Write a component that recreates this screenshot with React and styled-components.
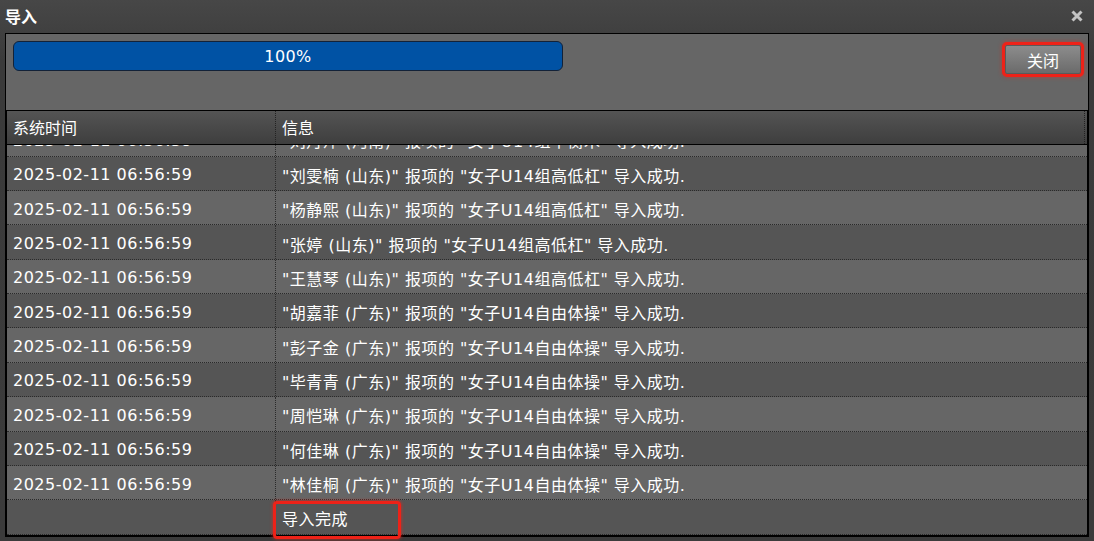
import React, { useLayoutEffect, useRef } from "react";
import styled, { createGlobalStyle } from "styled-components";

const GlobalStyle = createGlobalStyle`
  html, body { margin: 0; padding: 0; background: #3b3b3b; }
  body { font-family: "DejaVu Sans", "Noto Sans CJK SC", sans-serif; color: #fff; }
  * { box-sizing: border-box; }
`;

const Window = styled.div`
  width: 1094px;
  height: 541px;
  display: flex;
  flex-direction: column;
  background: linear-gradient(#474747, #3a3a3a 60px, #3b3b3b);
  overflow: hidden;
`;

const TitleBar = styled.div`
  height: 33px;
  flex: none;
  display: flex;
  align-items: center;
  justify-content: space-between;
  padding: 0 11px 2px 5px;
`;

const Title = styled.span`
  font-family: "Noto Sans CJK SC", sans-serif;
  font-weight: 700;
  font-size: 16px;
  color: #fff;
`;

const CloseX = styled.svg`
  width: 12px;
  height: 12px;
  display: block;
`;

const Panel = styled.div`
  position: relative;
  flex: 1;
  min-height: 0;
  margin: 0 5px 4px 5px;
  border: 1px solid #000;
  display: flex;
  flex-direction: column;
`;

const TopArea = styled.div`
  height: 76px;
  flex: none;
  background: #666;
  display: flex;
  justify-content: space-between;
  align-items: flex-start;
  padding: 7px 7px 0 7px;
`;

const Progress = styled.div`
  width: 550px;
  height: 30px;
  border: 1px solid #132238;
  border-radius: 6px;
  background: #0052a4;
  display: flex;
  align-items: center;
  justify-content: center;
  font-size: 16px;
  letter-spacing: 0.4px;
  color: #fff;
`;

const Button = styled.button`
  margin-top: 4px;
  width: 76px;
  height: 29px;
  border: 1px solid #5a5a5a;
  border-radius: 2px;
  background: linear-gradient(#8c8c8c, #6b6b6b);
  color: #fff;
  font-family: "Noto Sans CJK SC", sans-serif;
  font-size: 16px;
  padding: 0;
  outline: 3px solid #ee2218;
  outline-offset: 0px;
  box-shadow: 0 0 4px 3px rgba(238, 34, 24, 0.55);
`;

const Table = styled.div`
  flex: 1;
  min-height: 0;
  display: flex;
  flex-direction: column;
  border: 1px solid #000;
`;

const Header = styled.div`
  height: 34px;
  flex: none;
  display: grid;
  grid-template-columns: 269px 1fr;
  background: linear-gradient(#545454, #3e3e3e);
  border-bottom: 1px solid #000;
  padding-right: 2px;
`;

const HeadCell = styled.div`
  display: flex;
  align-items: center;
  padding: 0 0 1px 6px;
  font-family: "Noto Sans CJK SC", sans-serif;
  font-size: 16px;
  border-right: 1px dotted #222;
`;

const Body = styled.div`
  flex: 1;
  min-height: 0;
  overflow-y: scroll;
  &::-webkit-scrollbar { width: 5px; }
  &::-webkit-scrollbar-track { background: #404040; }
  &::-webkit-scrollbar-thumb { background: #7f7f7f; }
`;

const Row = styled.div`
  height: 34.36px;
  display: grid;
  grid-template-columns: 269px 1fr;
  background: ${(p) => (p.$light ? "#666666" : "#555555")};
  border-bottom: 1px dotted #2a2a2a;
`;

const Cell = styled.div`
  display: flex;
  align-items: center;
  padding: 3px 0 0 6px;
  font-size: 16px;
  letter-spacing: 0.5px;
  white-space: nowrap;
  font-family: ${(p) => (p.$cjk ? '"Noto Sans CJK SC", sans-serif' : "inherit")};
  border-right: ${(p) => (p.$sep ? "1px dotted #2a2a2a" : "none")};
`;

const Highlight = styled.div`
  position: absolute;
  left: 267px;
  bottom: -3px;
  width: 128px;
  height: 38px;
  border: 3px solid #ee2218;
  border-radius: 4px;
  box-shadow: 0 0 3px 1px rgba(238, 34, 24, 0.5);
  pointer-events: none;
`;

const TIME = "2025-02-11 06:56:59";

const last = [
  ["刘雯楠", "山东", "女子U14组高低杠"],
  ["杨静熙", "山东", "女子U14组高低杠"],
  ["张婷", "山东", "女子U14组高低杠"],
  ["王慧琴", "山东", "女子U14组高低杠"],
  ["胡嘉菲", "广东", "女子U14自由体操"],
  ["彭子金", "广东", "女子U14自由体操"],
  ["毕青青", "广东", "女子U14自由体操"],
  ["周恺琳", "广东", "女子U14自由体操"],
  ["何佳琳", "广东", "女子U14自由体操"],
  ["林佳桐", "广东", "女子U14自由体操"],
];

const names = ["刘丹萍", "李思雨", "陈可欣", "赵一诺", "孙悦", "周雨彤", "吴佳怡", "郑欣然", "王诗涵", "冯梓萱"];
const provs = ["河南", "浙江", "江苏", "北京", "上海", "湖北"];
const events = ["女子U14组平衡木", "女子U14组跳马", "女子U14组高低杠", "女子U14自由体操"];

const filler = Array.from({ length: 230 }, (_, i) => [
  names[i % names.length],
  provs[(i * 7) % provs.length],
  events[Math.floor(i / 12) % events.length],
]);
filler[filler.length - 1] = ["刘丹萍", "河南", "女子U14组平衡木"];

const rows = [...filler, ...last].map(
  ([n, p, e]) => `"${n} (${p})" 报项的 "${e}" 导入成功.`
);

export default function App() {
  const bodyRef = useRef(null);
  useLayoutEffect(() => {
    if (bodyRef.current) bodyRef.current.scrollTop = bodyRef.current.scrollHeight;
  }, []);
  const total = rows.length + 1;
  return (
    <>
      <GlobalStyle />
      <Window>
        <TitleBar>
          <Title>导入</Title>
          <CloseX viewBox="0 0 12 12">
            <path d="M1.5 1.5 L10.5 10.5 M10.5 1.5 L1.5 10.5" stroke="#c4c4c4" strokeWidth="3" strokeLinecap="butt" />
          </CloseX>
        </TitleBar>
        <Panel>
          <TopArea>
            <Progress>100%</Progress>
            <Button>关闭</Button>
          </TopArea>
          <Table>
            <Header>
              <HeadCell>系统时间</HeadCell>
              <HeadCell>信息</HeadCell>
            </Header>
            <Body ref={bodyRef}>
              {rows.map((msg, i) => (
                <Row key={i} $light={(total - 1 - i) % 2 === 1}>
                  <Cell $sep>{TIME}</Cell>
                  <Cell>{msg}</Cell>
                </Row>
              ))}
              <Row $light={false}>
                <Cell $sep />
                <Cell $cjk>导入完成</Cell>
              </Row>
            </Body>
          </Table>
          <Highlight />
        </Panel>
      </Window>
    </>
  );
}
